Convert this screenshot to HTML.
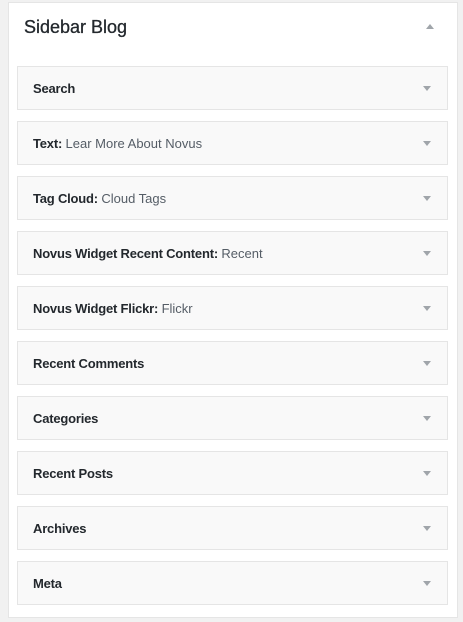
<!DOCTYPE html>
<html><head><meta charset="utf-8"><style>
html,body{margin:0;padding:0;background:#f1f1f1;width:463px;height:622px;overflow:hidden;font-family:"Liberation Sans",sans-serif;}
.panel{position:absolute;left:8px;top:2px;width:448px;height:614px;background:#fff;border:1px solid #e5e5e5;}
.title{position:absolute;left:15px;top:14px;font-size:18px;color:#23282d;-webkit-text-stroke:0.3px #23282d;}
.up{position:absolute;left:417px;top:21px;width:0;height:0;border-left:4px solid transparent;border-right:4px solid transparent;border-bottom:5px solid #a0a5aa;}
.w{position:absolute;left:8px;width:429px;height:42px;background:#f9f9f9;border:1px solid #e5e5e5;}
.w span.t{position:absolute;left:15px;top:14px;font-size:13px;color:#23282d;font-weight:bold;letter-spacing:-0.2px;}
.w span.t i{font-style:normal;font-weight:normal;color:#555d66;letter-spacing:0;}
.w b.a{position:absolute;left:405px;top:19px;width:0;height:0;border-left:4px solid transparent;border-right:4px solid transparent;border-top:5px solid #a0a5aa;}
</style></head><body>
<div class="panel">
<div class="title">Sidebar Blog</div>
<div class="up"></div>
<div class="w" style="top:63px"><span class="t">Search</span><b class="a"></b></div>
<div class="w" style="top:118px"><span class="t">Text: <i>Lear More About Novus</i></span><b class="a"></b></div>
<div class="w" style="top:173px"><span class="t">Tag Cloud: <i>Cloud Tags</i></span><b class="a"></b></div>
<div class="w" style="top:228px"><span class="t">Novus Widget Recent Content: <i>Recent</i></span><b class="a"></b></div>
<div class="w" style="top:283px"><span class="t">Novus Widget Flickr: <i>Flickr</i></span><b class="a"></b></div>
<div class="w" style="top:338px"><span class="t">Recent Comments</span><b class="a"></b></div>
<div class="w" style="top:393px"><span class="t">Categories</span><b class="a"></b></div>
<div class="w" style="top:448px"><span class="t">Recent Posts</span><b class="a"></b></div>
<div class="w" style="top:503px"><span class="t">Archives</span><b class="a"></b></div>
<div class="w" style="top:558px"><span class="t">Meta</span><b class="a"></b></div>
</div>
</body></html>
